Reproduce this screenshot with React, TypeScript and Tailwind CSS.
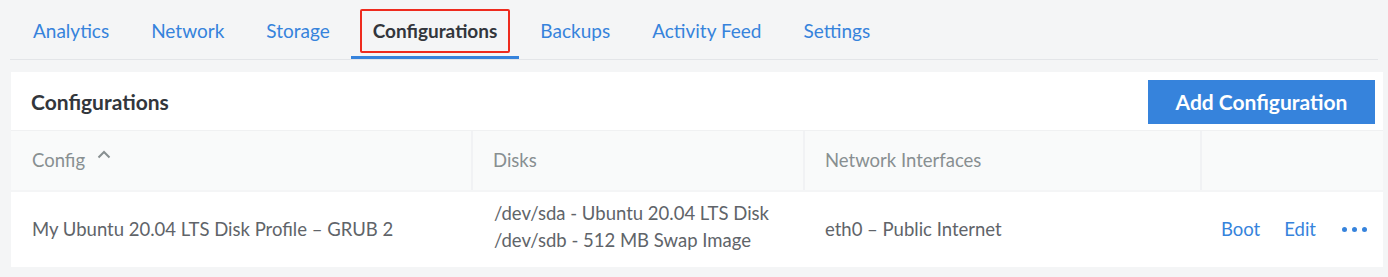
import React from "react";

const tabs = ["Analytics", "Network", "Storage", "Configurations", "Backups", "Activity Feed", "Settings"];

export default function App() {
  return (
    <div
      className="w-[1388px] h-[277px] bg-[#f4f5f6] overflow-hidden"
      style={{ fontFamily: "Lato, 'Open Sans', sans-serif" }}
    >
      <div className="mx-[10px] border-b border-[#e3e5e8] flex pl-[2px]">
        {tabs.map((t) => {
          const active = t === "Configurations";
          return (
            <div
              key={t}
              className={
                "h-[59px] pt-[6px] flex items-center border-b-[3px] text-[19px] " +
                (active ? "px-[9px] border-[#3683dc] text-[#32363c] font-bold" : "px-[21px] border-transparent text-[#3683dc]")
              }
            >
              {active ? (
                <span className="h-[44px] px-[11px] border-2 border-[#ee2b1e] rounded-[2px] flex items-center">{t}</span>
              ) : (
                t
              )}
            </div>
          );
        })}
      </div>

      <div className="ml-[11px] w-[1372px] mt-[12px] bg-white">
        <div className="h-[58px] flex items-center justify-between pl-[20px] pr-[8px]">
          <div className="text-[21px] font-bold text-[#32363c] pt-[2px]">Configurations</div>
          <button className="h-[44px] w-[227px] bg-[#3683dc] text-white text-[21px] font-bold flex items-center justify-center mt-[1px]">
            Add Configuration
          </button>
        </div>
        <div className="grid grid-cols-[462px_332px_397px_181px] bg-[#f9fafa] h-[62px] border-t border-[#f0f1f2] border-b-2 border-b-[#f4f5f6] text-[18.5px] text-[#888f91]">
          <div className="flex items-center pl-[21px] border-r-2 border-[#f1f2f4]">
            Config
            <svg width="14" height="9" viewBox="0 0 14 9" className="ml-[12px] mb-[12px]" fill="none">
              <path d="M1.5 7.5 L7 2 L12.5 7.5" stroke="#888f91" strokeWidth="2" />
            </svg>
          </div>
          <div className="flex items-center pl-[20px] border-r-2 border-[#f1f2f4]">Disks</div>
          <div className="flex items-center pl-[20px] border-r-2 border-[#f1f2f4]">Network Interfaces</div>
          <div></div>
        </div>
        <div className="grid grid-cols-[462px_332px_397px_181px] h-[75px] text-[18.5px] text-[#606469]">
          <div className="flex items-center pl-[21px]">My Ubuntu 20.04 LTS Disk Profile – GRUB 2</div>
          <div className="flex flex-col justify-center pl-[21px] pb-[5px] leading-[27px]">
            <div>/dev/sda - Ubuntu 20.04 LTS Disk</div>
            <div>/dev/sdb - 512 MB Swap Image</div>
          </div>
          <div className="flex items-center pl-[20px]">eth0 – Public Internet</div>
          <div className="flex items-center justify-end pr-[16px] text-[#3683dc]">
            <span>Boot</span>
            <span className="ml-[24px]">Edit</span>
            <span className="ml-[26px] flex gap-[5px] items-center">
              <span className="w-[5px] h-[5px] rounded-full bg-[#3683dc]" />
              <span className="w-[5px] h-[5px] rounded-full bg-[#3683dc]" />
              <span className="w-[5px] h-[5px] rounded-full bg-[#3683dc]" />
            </span>
          </div>
        </div>
      </div>
    </div>
  );
}
